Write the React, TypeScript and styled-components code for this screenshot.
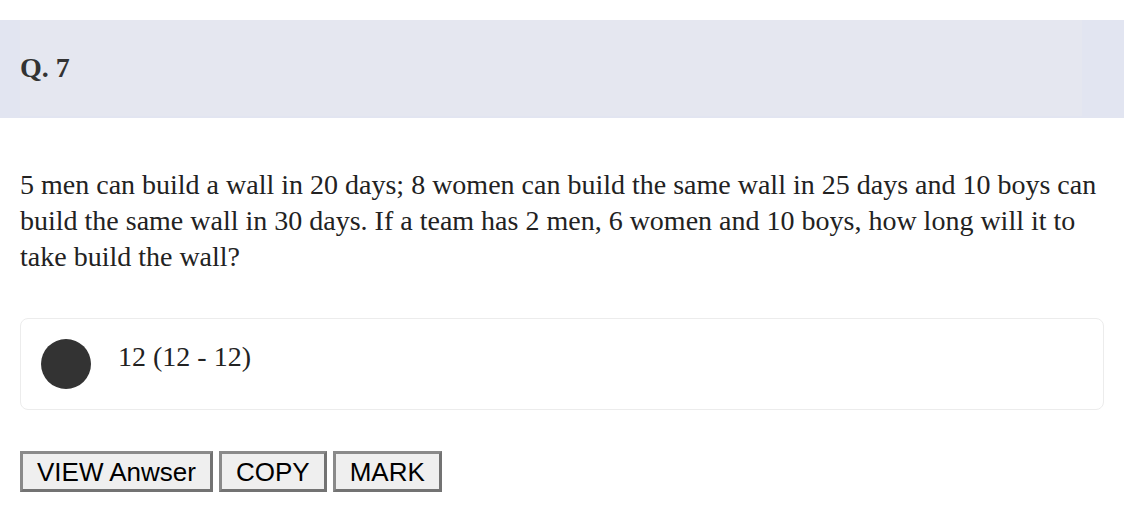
import React from 'react';
import styled, {createGlobalStyle} from 'styled-components';

const GlobalStyle = createGlobalStyle`
  body {
    margin: 0;
    background: #ffffff;
    font-family: 'Liberation Serif', 'Times New Roman', serif;
    color: #222222;
  }
`;

const Page = styled.div`
  padding-top: 20px;
`;

const HeaderBand = styled.div`
  height: 98px;
  background-color: #e2e5f1;
`;

const HeaderInner = styled.div`
  height: 96px;
  margin: 0 42px 0 20px;
  display: flex;
  align-items: center;
  background-color: #e5e7f0;
`;

const QuestionNo = styled.h2`
  margin: 0;
  font-size: 28px;
  font-weight: 700;
  line-height: 36px;
  color: #333333;
`;

const Body = styled.div`
  padding: 0 20px;
`;

const QuestionText = styled.p`
  margin: 49px 0 43px;
  font-size: 28px;
  line-height: 36px;
  color: #222222;
`;

const Option = styled.div`
  display: flex;
  align-items: flex-start;
  gap: 27px;
  padding: 20px;
  border: 1px solid #ececec;
  border-radius: 8px;
`;

const Dot = styled.span`
  flex: none;
  width: 50px;
  height: 50px;
  border-radius: 50%;
  background-color: #333333;
`;

const OptionText = styled.span`
  font-size: 28px;
  line-height: 36px;
`;

const Actions = styled.div`
  display: flex;
  gap: 6px;
  margin-top: 41px;
`;

const ActionButton = styled.button`
  box-sizing: border-box;
  height: 41px;
  padding: 1px 14px 0;
  border: 3px solid;
  border-color: #8a8a8a #737373 #737373 #8a8a8a;
  background-color: #efefef;
  font-family: 'Liberation Sans', Arial, sans-serif;
  font-size: 26px;
  line-height: 30px;
  color: #000000;
  cursor: pointer;
`;

export default function App() {
  return (
    <Page>
      <GlobalStyle />
      <HeaderBand>
        <HeaderInner>
          <QuestionNo>Q. 7</QuestionNo>
        </HeaderInner>
      </HeaderBand>
      <Body>
        <QuestionText>
          5 men can build a wall in 20 days; 8 women can build the same wall in
          25 days and 10 boys can build the same wall in 30 days. If a team has
          2 men, 6 women and 10 boys, how long will it to take build the wall?
        </QuestionText>
        <Option>
          <Dot />
          <OptionText>12 (12 - 12)</OptionText>
        </Option>
        <Actions>
          <ActionButton>VIEW Anwser</ActionButton>
          <ActionButton>COPY</ActionButton>
          <ActionButton>MARK</ActionButton>
        </Actions>
      </Body>
    </Page>
  );
}
